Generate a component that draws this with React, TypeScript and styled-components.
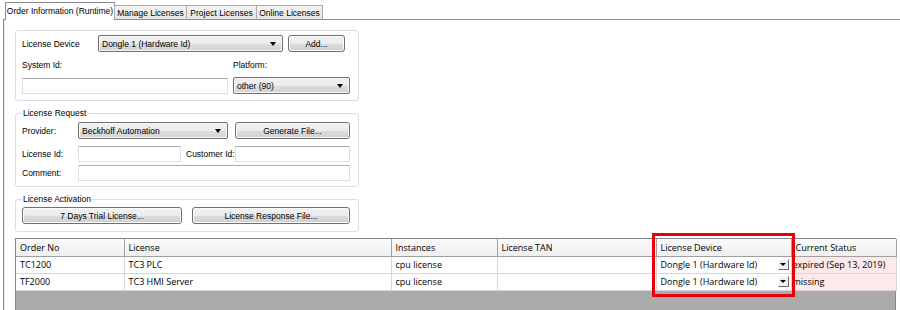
import styled, { createGlobalStyle } from "styled-components";

const GlobalStyle = createGlobalStyle`
  html, body {
    margin: 0;
    padding: 0;
    background: #fff;
  }
  body {
    width: 900px;
    height: 310px;
    overflow: hidden;
    font-family: "Liberation Sans", Arial, sans-serif;
    font-size: 8.5px;
    color: #000;
  }
  * {
    box-sizing: border-box;
  }
`;

const Page = styled.div`
  padding: 2px 0 0 3px;
`;

const TabStrip = styled.div`
  display: flex;
  align-items: flex-end;
  height: 18px;
  padding-left: 2px;
  position: relative;
  z-index: 1;
  margin-bottom: -1px;
`;

const Tab = styled.div<{ $active?: boolean; $w: number }>`
  width: ${(p) => p.$w}px;
  height: ${(p) => (p.$active ? 18 : 15)}px;
  margin-left: ${(p) => (p.$active ? 0 : -1)}px;
  border: 1px solid ${(p) => (p.$active ? "#898c95" : "#acacac")};
  border-bottom: ${(p) => (p.$active ? "none" : "1px solid #898c95")};
  background: ${(p) =>
    p.$active ? "#fff" : "linear-gradient(#f3f3f3, #e5e5e5)"};
  display: flex;
  align-items: center;
  justify-content: center;
  padding-bottom: ${(p) => (p.$active ? 2 : 0)}px;
  white-space: nowrap;
`;

const Panel = styled.div`
  border-top: 1px solid #898c95;
  border-left: 1px solid #898c95;
  box-shadow: inset 1px 0 0 #e6e6e6;
  padding: 10px 0 0 11px;
  height: 300px;
`;

const Group = styled.fieldset<{ $pt: number; $pb: number; $mt?: number }>`
  width: 344px;
  margin: ${(p) => p.$mt ?? 0}px 0 0 0;
  padding: ${(p) => p.$pt}px 7px ${(p) => p.$pb}px 6px;
  border: 1px solid #d5dfe5;
  border-radius: 3px;
  display: flex;
  flex-direction: column;
  min-width: 0;
`;

const Legend = styled.legend`
  padding: 0 1px;
  line-height: 12px;
  margin-left: 0;
`;

const Row = styled.div<{ $mt?: number; $h?: number }>`
  display: flex;
  align-items: center;
  margin-top: ${(p) => p.$mt ?? 0}px;
  height: ${(p) => p.$h ?? 17}px;
`;

const Label = styled.span<{ $w: number; $pl?: number }>`
  width: ${(p) => p.$w}px;
  padding-left: ${(p) => p.$pl ?? 0}px;
  flex: none;
  white-space: nowrap;
`;

const Combo = styled.div<{ $w: number; $ml?: number }>`
  width: ${(p) => p.$w}px;
  margin-left: ${(p) => p.$ml ?? 0}px;
  height: 17px;
  flex: none;
  border: 1px solid #707070;
  border-radius: 2px;
  background: linear-gradient(#f2f2f2 0%, #ebebeb 50%, #dddddd 51%, #d5d5d5 100%);
  box-shadow: inset 0 0 0 1px #f8f8f8;
  display: flex;
  align-items: center;
  justify-content: space-between;
  padding: 0 6px 0 3px;
  white-space: nowrap;
`;

const Arrow = styled.span`
  width: 0;
  height: 0;
  border-left: 3.5px solid transparent;
  border-right: 3.5px solid transparent;
  border-top: 4px solid #000;
`;

const Button = styled.div<{ $w: number; $ml?: number }>`
  width: ${(p) => p.$w}px;
  margin-left: ${(p) => p.$ml ?? 0}px;
  height: 17px;
  flex: none;
  border: 1px solid #707070;
  border-radius: 3px;
  background: linear-gradient(#f2f2f2 0%, #ebebeb 50%, #dddddd 51%, #cfcfcf 100%);
  box-shadow: inset 0 0 0 1px #fbfbfb;
  display: flex;
  align-items: center;
  justify-content: center;
  white-space: nowrap;
`;

const Input = styled.div<{ $w: number; $ml?: number }>`
  width: ${(p) => p.$w}px;
  margin-left: ${(p) => p.$ml ?? 0}px;
  height: 16px;
  flex: none;
  background: #fff;
  border: 1px solid #dbdfe6;
  border-top-color: #abadb3;
`;

const TableWrap = styled.div`
  position: relative;
  margin-top: 6px;
  width: 881px;
  height: 80px;
  border: 1px solid #828790;
  background: #ababab;
`;

const Grid = styled.table`
  border-collapse: collapse;
  table-layout: fixed;
  width: 880px;
  font-family: "Open Sans", "Noto Sans", sans-serif;
  font-size: 9px;
`;

const Th = styled.th`
  height: 17px;
  padding: 0 4px;
  text-align: left;
  font-weight: normal;
  background: linear-gradient(#fafafa, #efefef);
  border-right: 1px solid #a0a0a0;
  border-bottom: 1px solid #a0a0a0;
  white-space: nowrap;
  overflow: hidden;
`;

const Td = styled.td<{ $status?: boolean }>`
  height: 17px;
  padding: 0 4px 0 ${(p) => (p.$status ? 1 : 4)}px;
  background: ${(p) => (p.$status ? "#fde9e9" : "#fff")};
  border-right: 1px solid #d6d6d6;
  border-bottom: 1px solid #d6d6d6;
  white-space: nowrap;
  overflow: hidden;
`;

const DeviceCell = styled.div`
  display: flex;
  align-items: center;
  justify-content: space-between;
`;

const CellDrop = styled.span`
  width: 11px;
  height: 11px;
  margin-right: -2px;
  background: #f0f0f0;
  border: 1px solid;
  border-color: #fff #696969 #696969 #fff;
  display: flex;
  align-items: center;
  justify-content: center;
`;

const SmallArrow = styled.span`
  width: 0;
  height: 0;
  border-left: 3px solid transparent;
  border-right: 3px solid transparent;
  border-top: 3px solid #000;
`;

const Highlight = styled.div`
  position: absolute;
  left: 636px;
  top: -6px;
  width: 143px;
  height: 64px;
  border: 3px solid #e8000b;
  pointer-events: none;
`;

const cols = [108, 267, 106, 159, 135, 105];

const rows = [
  { order: "TC1200", license: "TC3 PLC", status: "expired (Sep 13, 2019)" },
  { order: "TF2000", license: "TC3 HMI Server", status: "missing" },
];

export default function App() {
  return (
    <Page>
      <GlobalStyle />
      <TabStrip>
        <Tab $active $w={110}>Order Information (Runtime)</Tab>
        <Tab $w={73}>Manage Licenses</Tab>
        <Tab $w={71}>Project Licenses</Tab>
        <Tab $w={67}>Online Licenses</Tab>
      </TabStrip>
      <Panel>
        <Group as="div" $pt={4} $pb={6}>
          <Row>
            <Label $w={76}>License Device</Label>
            <Combo $w={185}>
              Dongle 1 (Hardware Id)
              <Arrow />
            </Combo>
            <Button $w={57} $ml={5}>Add...</Button>
          </Row>
          <Row $mt={6} $h={14}>
            <Label $w={211}>System Id:</Label>
            <Label $w={60}>Platform:</Label>
          </Row>
          <Row $mt={5}>
            <Input $w={206} />
            <Combo $w={117} $ml={5}>
              other (90)
              <Arrow />
            </Combo>
          </Row>
        </Group>

        <Group $pt={3} $pb={5} $mt={6}>
          <Legend>License Request</Legend>
          <Row>
            <Label $w={56}>Provider:</Label>
            <Combo $w={150}>
              Beckhoff Automation
              <Arrow />
            </Combo>
            <Button $w={115} $ml={7}>Generate File...</Button>
          </Row>
          <Row $mt={7} $h={16}>
            <Label $w={56}>License Id:</Label>
            <Input $w={103} />
            <Label $w={54} $pl={5}>Customer Id:</Label>
            <Input $w={115} />
          </Row>
          <Row $mt={3} $h={16}>
            <Label $w={56}>Comment:</Label>
            <Input $w={272} />
          </Row>
        </Group>

        <Group $pt={2} $pb={7} $mt={6}>
          <Legend>License Activation</Legend>
          <Row>
            <Button $w={160}>7 Days Trial License...</Button>
            <Button $w={158} $ml={10}>License Response File...</Button>
          </Row>
        </Group>

        <TableWrap>
          <Grid>
            <colgroup>
              {cols.map((w, i) => (
                <col key={i} style={{ width: w }} />
              ))}
            </colgroup>
            <thead>
              <tr>
                <Th>Order No</Th>
                <Th>License</Th>
                <Th>Instances</Th>
                <Th>License TAN</Th>
                <Th>License Device</Th>
                <Th>Current Status</Th>
              </tr>
            </thead>
            <tbody>
              {rows.map((r) => (
                <tr key={r.order}>
                  <Td>{r.order}</Td>
                  <Td>{r.license}</Td>
                  <Td>cpu license</Td>
                  <Td />
                  <Td>
                    <DeviceCell>
                      Dongle 1 (Hardware Id)
                      <CellDrop>
                        <SmallArrow />
                      </CellDrop>
                    </DeviceCell>
                  </Td>
                  <Td $status>{r.status}</Td>
                </tr>
              ))}
            </tbody>
          </Grid>
          <Highlight />
        </TableWrap>
      </Panel>
    </Page>
  );
}
